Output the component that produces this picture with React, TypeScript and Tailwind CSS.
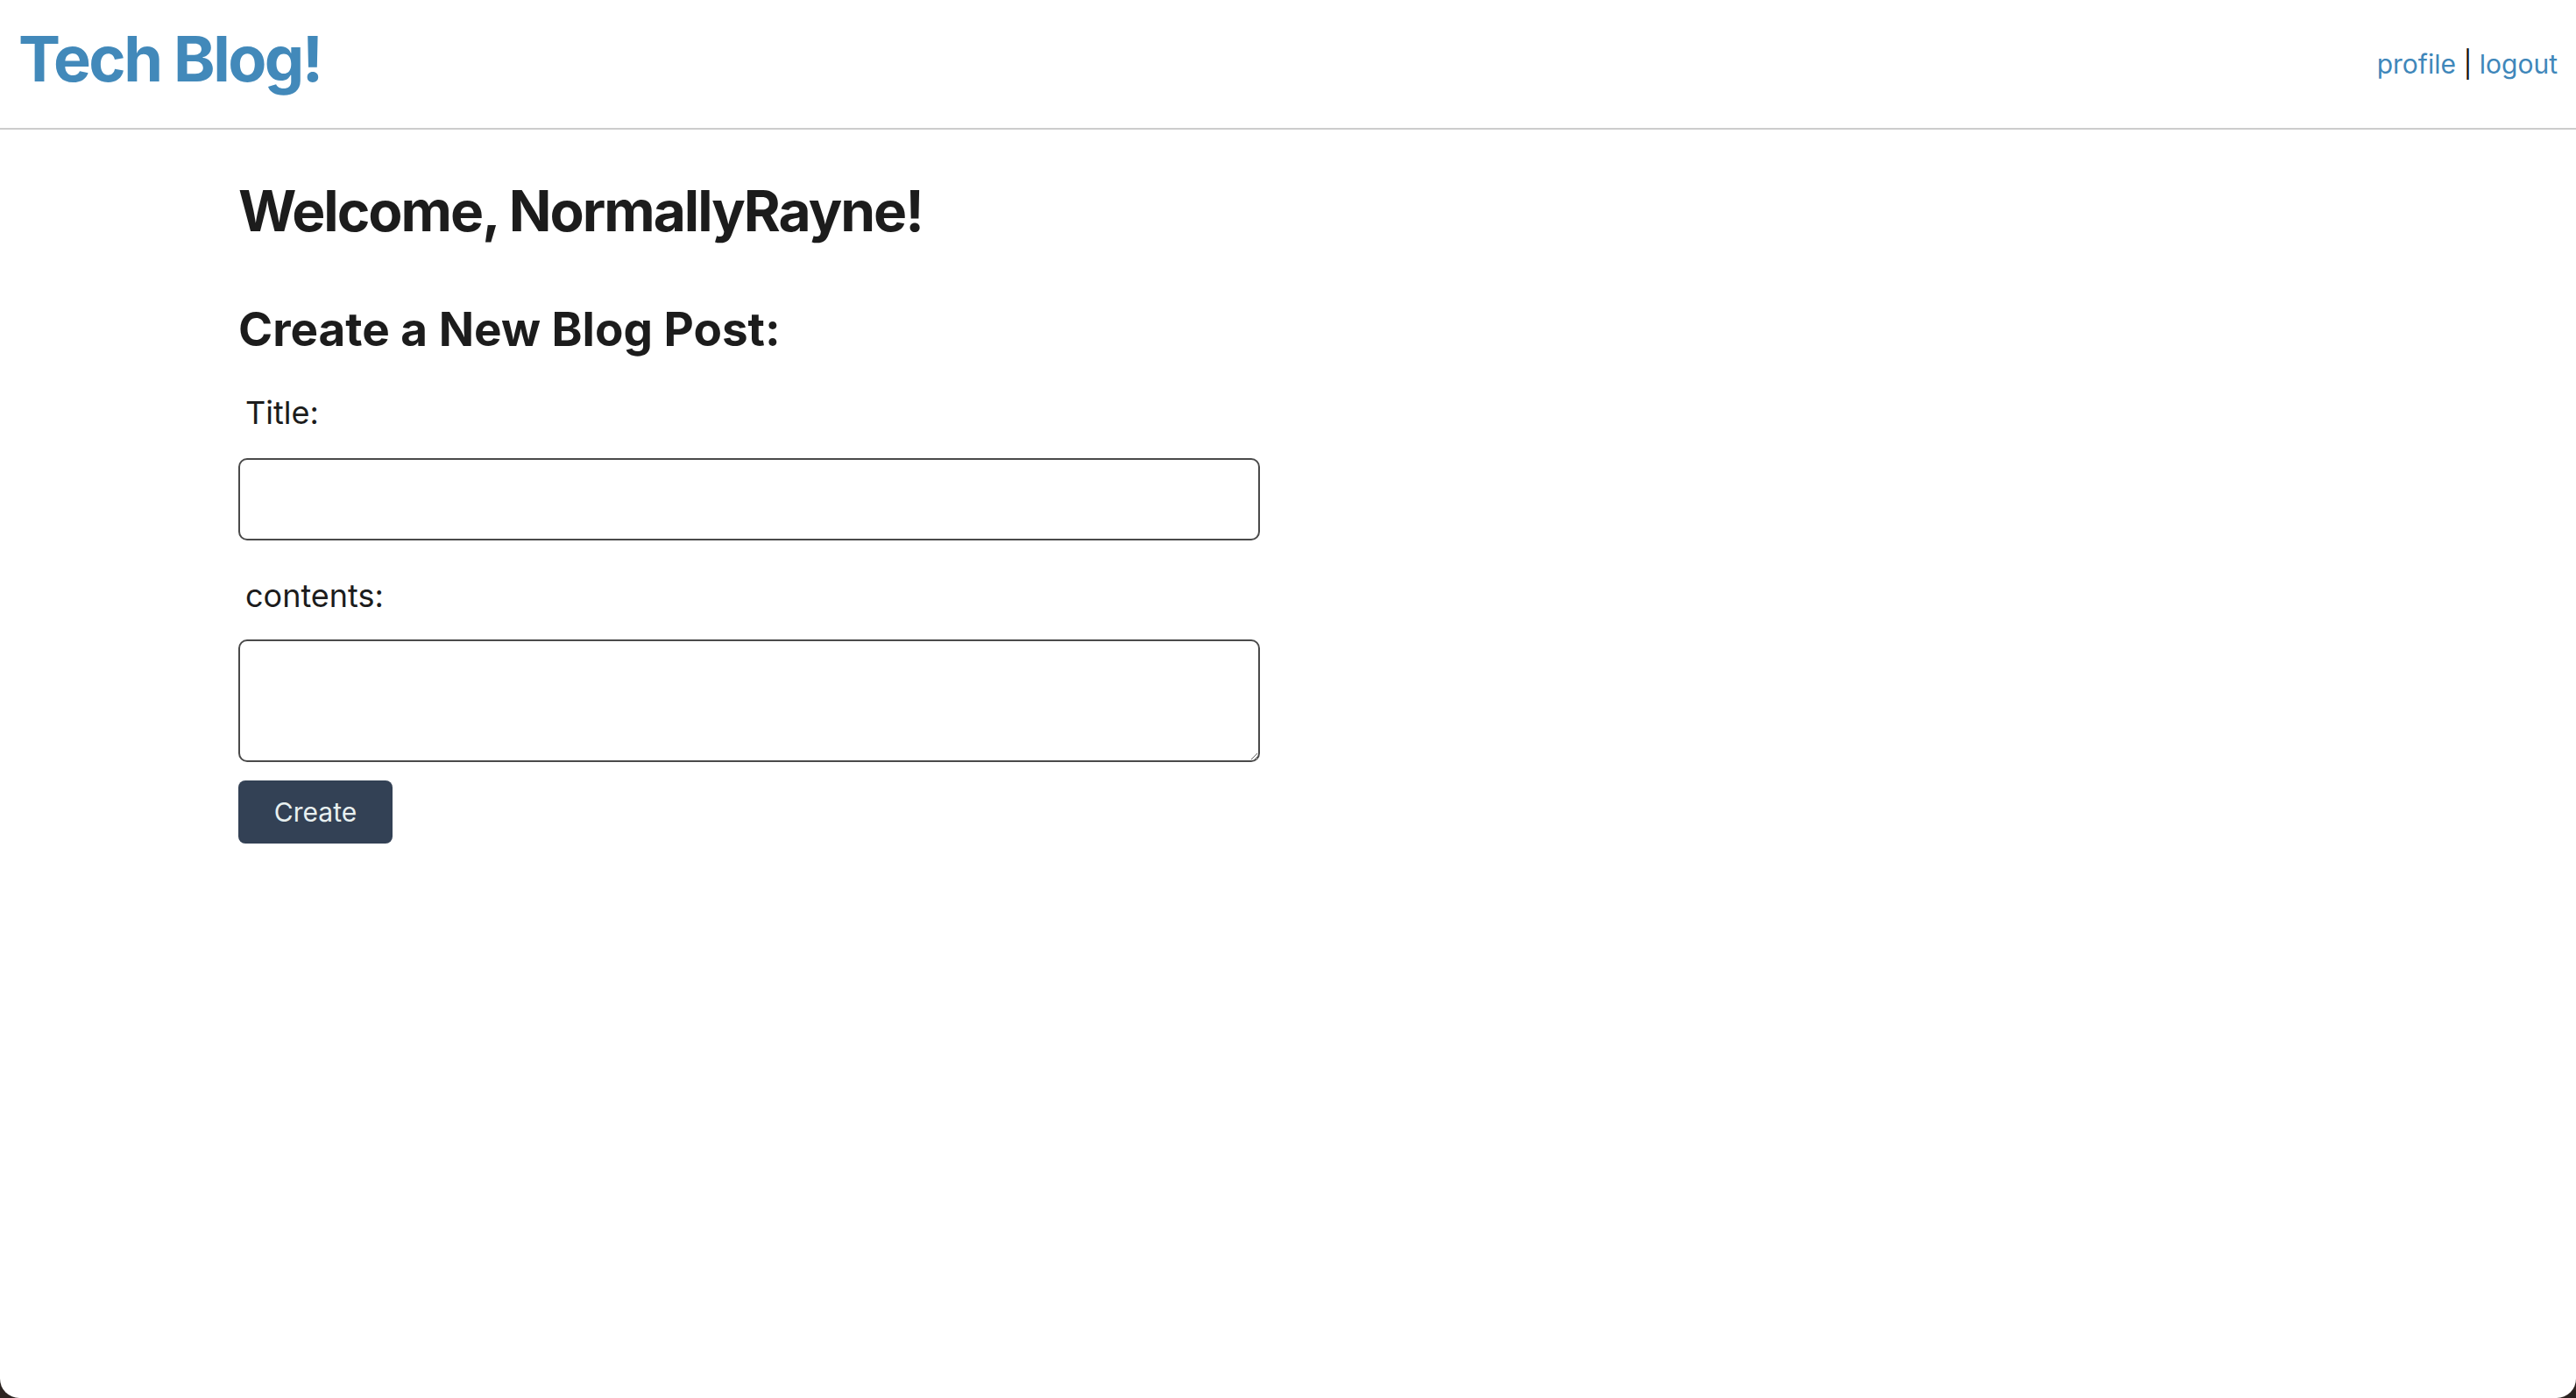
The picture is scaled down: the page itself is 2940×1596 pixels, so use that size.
export default function App() {
  return (
    <div className="min-h-[1596px] bg-[#2b2320] font-['Inter',sans-serif]">
      <div className="min-h-[1596px] bg-white rounded-b-[22px]">
        {/* Header */}
        <header className="h-[148px] border-b-2 border-[#cccccc] flex justify-between px-[21px]">
          <h1 className="pt-[23px] text-[72px] leading-[87px] font-bold text-[#4289ba] tracking-[-2.5px]">Tech Blog!</h1>
          <nav className="pt-[55px] text-[30px] leading-[36px] text-[#111]">
            <a href="#" className="text-[#3f87ba]">profile</a> | <a href="#" className="text-[#3f87ba]">logout</a>
          </nav>
        </header>

        {/* Content */}
        <main className="pl-[272px] flex flex-col items-start text-[#1c1c1c]">
          <h2 className="mt-[54px] text-[64px] leading-[77px] font-bold tracking-[-2px]">Welcome, NormallyRayne!</h2>
          <h3 className="mt-[65px] text-[53px] leading-[64px] font-bold">Create a New Blog Post:</h3>

          <form className="flex flex-col items-start">
            <label className="mt-[41px] ml-[8px] text-[36px] leading-[44px]">Title:</label>
            <input type="text" className="mt-[30px] w-[1166px] h-[94px] border-2 border-[#4a4a4a] rounded-[10px] px-4 text-[30px]" />
            <label className="mt-[41px] ml-[8px] text-[36px] leading-[44px]">contents:</label>
            <textarea className="mt-[28px] w-[1166px] h-[140px] border-2 border-[#4a4a4a] rounded-[10px] px-4 text-[30px]" />
            <button type="button" className="mt-[21px] w-[176px] h-[72px] bg-[#334155] rounded-[8px] text-[30px] text-[#e8f0f0]">Create</button>
          </form>
        </main>
      </div>
    </div>
  )
}
